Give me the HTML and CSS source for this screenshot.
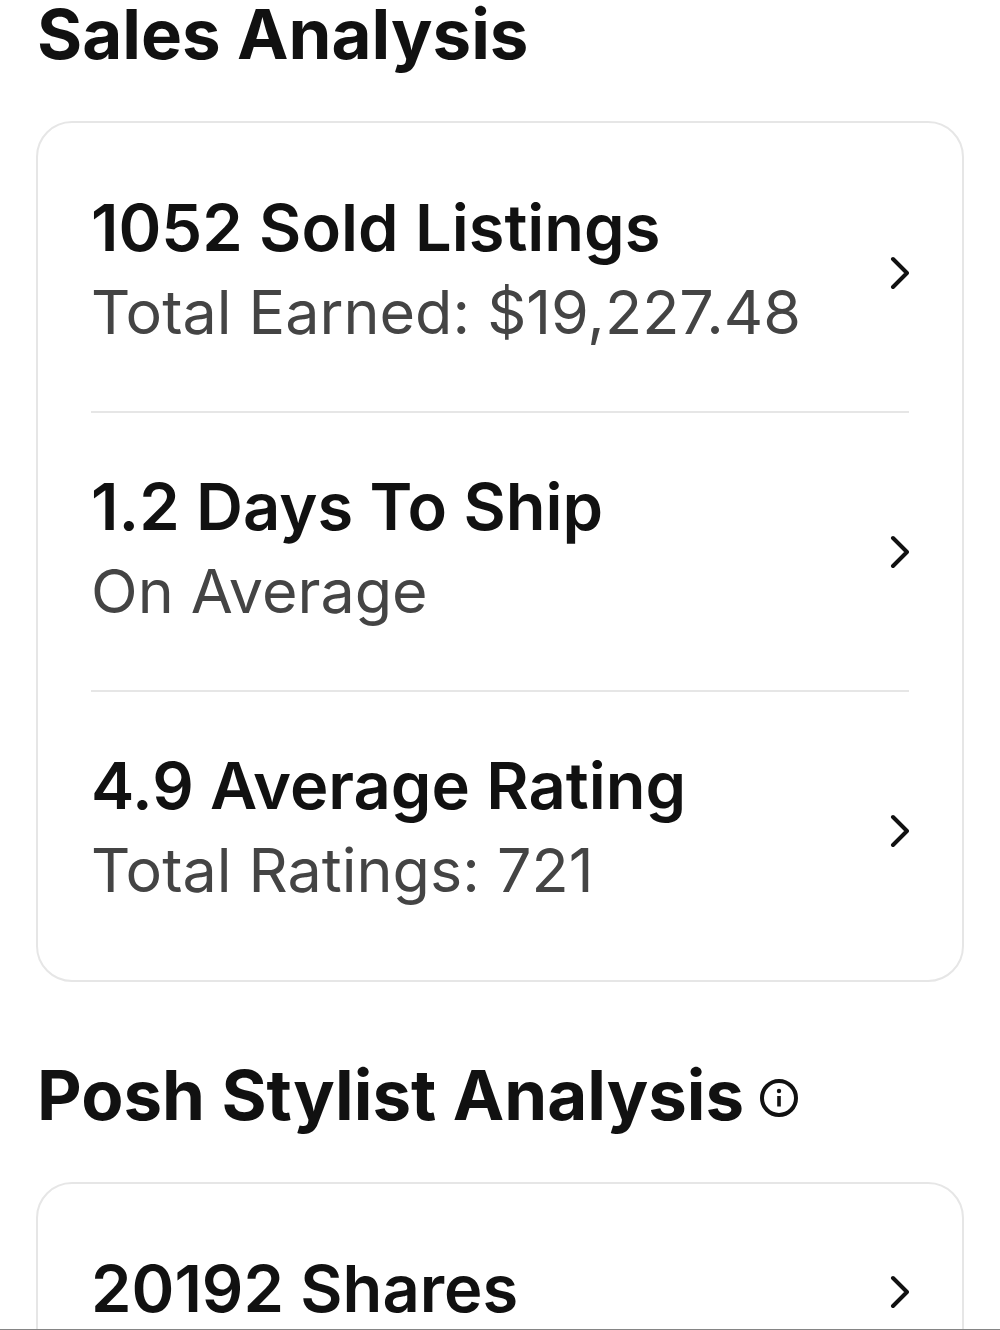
FILE: index.html
```html
<!DOCTYPE html>
<html lang="en">
<head>
    <meta charset="UTF-8">
    <meta name="viewport" content="width=device-width, initial-scale=1.0">
    <title>My Stats</title>
    <link rel="stylesheet" href="styles.css">
</head>
<body>
    <main class="stats">
        <section>
            <h2 class="section-title">Sales Analysis</h2>
            <div class="card">
                <a href="#" class="stat">
                    <div class="stat-text">
                        <h3>1052 Sold Listings</h3>
                        <p>Total Earned: $19,227.48</p>
                    </div>
                    <svg class="chevron" viewBox="0 0 20 34"><path d="M4 3 L18 17 L4 31"/></svg>
                </a>
                <a href="#" class="stat">
                    <div class="stat-text">
                        <h3>1.2 Days To Ship</h3>
                        <p>On Average</p>
                    </div>
                    <svg class="chevron" viewBox="0 0 20 34"><path d="M4 3 L18 17 L4 31"/></svg>
                </a>
                <a href="#" class="stat">
                    <div class="stat-text">
                        <h3>4.9 Average Rating</h3>
                        <p>Total Ratings: 721</p>
                    </div>
                    <svg class="chevron" viewBox="0 0 20 34"><path d="M4 3 L18 17 L4 31"/></svg>
                </a>
            </div>
        </section>

        <section>
            <h2 class="section-title">
                Posh Stylist Analysis
                <button type="button" class="info" aria-label="About Posh Stylist Analysis">
                    <svg viewBox="0 0 38 38">
                        <circle class="ring" cx="19" cy="19" r="17"/>
                        <circle cx="19" cy="12" r="2.2"/>
                        <path d="M17.2 17 H20.8 V27.5 H17.2 Z"/>
                    </svg>
                </button>
            </h2>
            <div class="card">
                <a href="#" class="stat">
                    <div class="stat-text">
                        <h3>20192 Shares</h3>
                    </div>
                    <svg class="chevron" viewBox="0 0 20 34"><path d="M4 3 L18 17 L4 31"/></svg>
                </a>
            </div>
        </section>
    </main>
</body>
</html>
```
FILE: styles.css
```css
* {
    box-sizing: border-box;
}

body {
    margin: 0;
    background-color: #fff;
    color: #111;
    font-family: Inter, "Liberation Sans", sans-serif;
}

.stats {
    height: 100vh;
    padding: 0 36px;
    overflow: hidden;
    border-bottom: 1px solid #858585;
}

.section-title {
    display: flex;
    align-items: center;
    gap: 16px;
    margin: 0;
    padding-left: 1px;
    font-size: 69px;
    font-weight: 700;
    line-height: 68px;
    white-space: nowrap;
}

.card {
    margin: 53px 0 79px;
    padding: 11px 53px;
    border: 2px solid #e6e6e6;
    border-radius: 36px;
}

.stat {
    display: flex;
    align-items: center;
    justify-content: space-between;
    padding: 52px 0 57px;
    color: inherit;
    text-decoration: none;
    white-space: nowrap;
}

.stat + .stat {
    border-top: 2px solid #e6e6e6;
}

.stat h3 {
    margin: 0;
    font-size: 65px;
    font-weight: 600;
    line-height: 84px;
}

.stat p {
    margin: 0;
    color: #444;
    font-size: 61px;
    font-weight: 400;
    line-height: 84px;
}

.chevron {
    flex: none;
    width: 20px;
    height: 34px;
    margin-top: 6px;
    fill: none;
    stroke: #111;
    stroke-width: 4;
    stroke-linecap: round;
    stroke-linejoin: round;
}

.info {
    width: 38px;
    height: 38px;
    margin-top: 6px;
    padding: 0;
    border: 0;
    background: none;
}

.info svg {
    display: block;
    fill: #111;
}

.info .ring {
    fill: none;
    stroke: #111;
    stroke-width: 4;
}
```
